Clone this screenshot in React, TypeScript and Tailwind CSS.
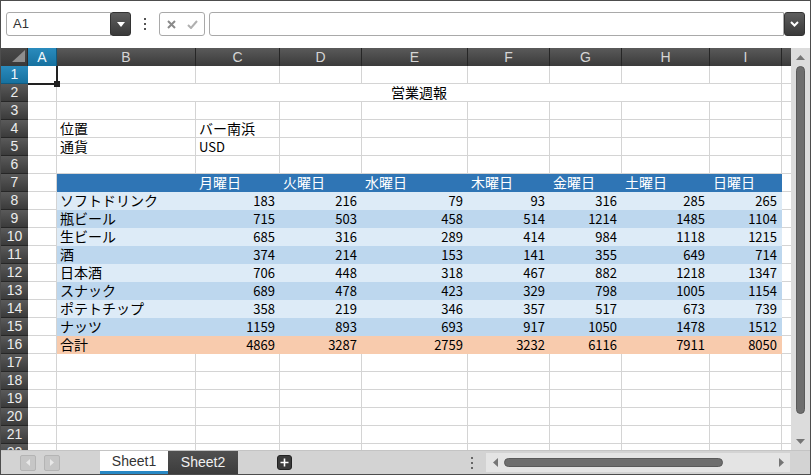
import React from 'react';

const W = ['w-[29px]', 'w-[139px]', 'w-[84px]', 'w-[82px]', 'w-[106px]', 'w-[82px]', 'w-[72px]', 'w-[88px]', 'w-[72px]'];
const LET = ['A', 'B', 'C', 'D', 'E', 'F', 'G', 'H', 'I'];
const JP = "font-['Noto_Sans_CJK_JP',sans-serif]";

const items: [string, number[]][] = [
  ['ソフトドリンク', [183, 216, 79, 93, 316, 285, 265]],
  ['瓶ビール', [715, 503, 458, 514, 1214, 1485, 1104]],
  ['生ビール', [685, 316, 289, 414, 984, 1118, 1215]],
  ['酒', [374, 214, 153, 141, 355, 649, 714]],
  ['日本酒', [706, 448, 318, 467, 882, 1218, 1347]],
  ['スナック', [689, 478, 423, 329, 798, 1005, 1154]],
  ['ポテトチップ', [358, 219, 346, 357, 517, 673, 739]],
  ['ナッツ', [1159, 893, 693, 917, 1050, 1478, 1512]],
];
const total: [string, number[]] = ['合計', [4869, 3287, 2759, 3232, 6116, 7911, 8050]];
const days = ['月曜日', '火曜日', '水曜日', '木曜日', '金曜日', '土曜日', '日曜日'];

const GRID = 'border-[#d4d4d4]';
const BLUE = 'bg-[#2f75b5] border-[#2f75b5]';
const LIGHT = 'bg-[#ddebf7] border-[#ddebf7]';
const MID = 'bg-[#bdd7ee] border-[#bdd7ee]';
const ORANGE = 'bg-[#f8cbad] border-[#f8cbad]';

function Cell({ w, fill, className = '', children }: { w: string; fill?: string; className?: string; children?: React.ReactNode }) {
  return (
    <div className={`${w} shrink-0 h-full border-r border-b ${fill ?? GRID} flex items-center overflow-hidden whitespace-nowrap leading-[17px] ${className}`}>
      {children}
    </div>
  );
}

function RowHead({ n, sel }: { n: number; sel?: boolean }) {
  return (
    <div
      className={`w-[27px] shrink-0 h-full border-b flex items-center justify-center text-[14px] leading-[17px] ${
        sel
          ? 'bg-linear-to-b from-[#2a8bbd] to-[#16719f] border-[#0f5a80] text-[#eef6fb]'
          : 'bg-linear-to-b from-[#5a5a5a] to-[#3b3b3b] border-[#262626] text-[#ececec]'
      }`}
    >
      {n}
    </div>
  );
}

function Filler() {
  return <div className={`flex-1 h-full border-b ${GRID}`} />;
}

function Row({ n, sel, children }: { n: number; sel?: boolean; children?: React.ReactNode }) {
  return (
    <div className="flex h-[18px] shrink-0">
      <RowHead n={n} sel={sel} />
      {children}
      <Filler />
    </div>
  );
}

function EmptyCells({ from = 0 }: { from?: number }) {
  return (
    <>
      {W.slice(from).map((w, i) => (
        <Cell key={i} w={w} />
      ))}
    </>
  );
}

function DataRow({ n, label, vals, fill }: { n: number; label: string; vals: number[]; fill: string }) {
  return (
    <Row n={n}>
      <Cell w={W[0]} />
      <Cell w={W[1]} fill={fill} className={`${JP} text-[14px] pl-[3px] text-black`}>
        {label}
      </Cell>
      {vals.map((v, i) => (
        <Cell key={i} w={W[i + 2]} fill={fill} className={`${JP} text-[13px] justify-end pr-[4px] text-black`}>
          {v}
        </Cell>
      ))}
    </Row>
  );
}

function TopBar() {
  return (
    <div className="h-[47px] shrink-0 flex items-start pt-[11px] pl-[5px] bg-white">
      <div className="flex h-[24px]">
        <div className="w-[105px] h-full border border-[#a9a9a9] rounded-l-[3px] flex items-center pl-[6px] text-[13px] text-[#333]">A1</div>
        <div className="w-[21px] h-full -ml-[1px] rounded-[3px] border border-[#333] bg-linear-to-b from-[#5e5e5e] to-[#3a3a3a] flex items-center justify-center">
          <svg width="8" height="5" viewBox="0 0 8 5">
            <polygon points="0,0 8,0 4,5" fill="#ffffff" />
          </svg>
        </div>
      </div>
      <div className="w-[28px] h-[24px] flex flex-col items-center justify-center gap-[3px]">
        <div className="w-[2px] h-[2px] bg-[#555]" />
        <div className="w-[2px] h-[2px] bg-[#555]" />
        <div className="w-[2px] h-[2px] bg-[#555]" />
      </div>
      <div className="w-[46px] h-[24px] border border-[#a9a9a9] rounded-[3px] flex items-center pl-[7px] gap-[11px]">
        <svg width="9" height="9" viewBox="0 0 9 9">
          <path d="M1 1 L8 8 M8 1 L1 8" stroke="#8a8a8a" strokeWidth="2" />
        </svg>
        <svg width="11" height="9" viewBox="0 0 11 9">
          <path d="M1 5 L4 8 L10 1" stroke="#b0b0b0" strokeWidth="2" fill="none" />
        </svg>
      </div>
      <div className="w-[575px] h-[24px] ml-[4px] border border-[#a9a9a9] rounded-l-[3px]" />
      <div className="w-[21px] h-[24px] rounded-[3px] border border-[#333] bg-linear-to-b from-[#5e5e5e] to-[#3a3a3a] flex items-center justify-center">
        <svg width="9" height="6" viewBox="0 0 9 6">
          <path d="M1 1 L4.5 4.5 L8 1" stroke="#ffffff" strokeWidth="2" fill="none" />
        </svg>
      </div>
    </div>
  );
}

function HeaderRow() {
  return (
    <div className="flex h-[18px] shrink-0">
      <div className="w-[27px] shrink-0 h-full bg-linear-to-b from-[#4a4a4a] to-[#383838] border-r border-[#2a2a2a]">
        <svg width="26" height="18" viewBox="0 0 26 18">
          <polygon points="11,14 24,14 24,2" fill="#8e8e8e" />
        </svg>
      </div>
      {W.map((w, i) => (
        <div
          key={i}
          className={`${w} shrink-0 h-full border-r flex items-center justify-center text-[14px] leading-[17px] ${
            i === 0
              ? 'bg-linear-to-b from-[#2a8bbd] to-[#16719f] border-[#0f5a80] text-[#f2f8fc]'
              : 'bg-linear-to-b from-[#5a5a5a] to-[#3b3b3b] border-[#262626] text-[#d6d6d6]'
          }`}
        >
          {LET[i]}
        </div>
      ))}
      <div className="flex-1 h-full bg-linear-to-b from-[#5a5a5a] to-[#3b3b3b]" />
    </div>
  );
}

function VScroll() {
  return (
    <div className="w-[19px] shrink-0 h-full bg-[#dcdcdc] flex flex-col items-center">
      <div className="h-[18px] flex items-center justify-center">
        <svg width="9" height="5" viewBox="0 0 9 5">
          <polygon points="0,5 4.5,0 9,5" fill="#757575" />
        </svg>
      </div>
      <div className="w-[9px] h-[348px] rounded-full bg-[#6e6e6e] border border-[#5a5a5a]" />
      <div className="flex-1" />
      <div className="h-[18px] flex items-center justify-center">
        <svg width="9" height="5" viewBox="0 0 9 5">
          <polygon points="0,0 4.5,5 9,0" fill="#757575" />
        </svg>
      </div>
    </div>
  );
}

function BottomBar() {
  return (
    <div className="h-[24px] shrink-0 bg-[#d3d3d3] border-t border-[#c4c4c4] flex">
      <div className="w-[99px] shrink-0 flex items-center pl-[19px] gap-[8px]">
        <div className="w-[16px] h-[16px] rounded-[2px] bg-[#c6c6c6] border border-[#b4b4b4] flex items-center justify-center">
          <svg width="4" height="7" viewBox="0 0 4 7">
            <polygon points="4,0 0,3.5 4,7" fill="#e8e8e8" />
          </svg>
        </div>
        <div className="w-[16px] h-[16px] rounded-[2px] bg-[#c6c6c6] border border-[#b4b4b4] flex items-center justify-center">
          <svg width="4" height="7" viewBox="0 0 4 7">
            <polygon points="0,0 4,3.5 0,7" fill="#e8e8e8" />
          </svg>
        </div>
      </div>
      <div className="w-[68px] shrink-0 bg-white border-b-[3px] border-[#2888c4] flex items-center justify-center text-[14px] text-[#333]">Sheet1</div>
      <div className="w-[70px] shrink-0 bg-linear-to-b from-[#505050] to-[#3c3c3c] flex items-center justify-center text-[14px] text-[#f0f0f0]">Sheet2</div>
      <div className="ml-[39px] self-center w-[15px] h-[15px] rounded-[3px] bg-[#3a3a3a] border border-[#222] flex items-center justify-center">
        <svg width="9" height="9" viewBox="0 0 9 9">
          <path d="M4.5 0.5 V8.5 M0.5 4.5 H8.5" stroke="#ffffff" strokeWidth="1.6" />
        </svg>
      </div>
      <div className="flex-1" />
      <div className="w-[28px] shrink-0 flex flex-col items-center justify-center gap-[3px]">
        <div className="w-[2px] h-[2px] bg-[#666]" />
        <div className="w-[2px] h-[2px] bg-[#666]" />
        <div className="w-[2px] h-[2px] bg-[#666]" />
      </div>
      <div className="w-[304px] shrink-0 h-[19px] mt-[2px] bg-[#e4e4e4] flex items-center">
        <div className="w-[18px] flex items-center justify-center">
          <svg width="5" height="9" viewBox="0 0 5 9">
            <polygon points="5,0 0,4.5 5,9" fill="#757575" />
          </svg>
        </div>
        <div className="w-[219px] h-[9px] rounded-full bg-[#6e6e6e] border border-[#5a5a5a]" />
        <div className="flex-1" />
        <div className="w-[18px] flex items-center justify-center">
          <svg width="5" height="9" viewBox="0 0 5 9">
            <polygon points="0,0 5,4.5 0,9" fill="#757575" />
          </svg>
        </div>
      </div>
      <div className="w-[20px] shrink-0" />
    </div>
  );
}

export default function App() {
  return (
    <div className="w-[811px] h-[475px] border border-[#4d4d4d] bg-white flex flex-col overflow-hidden font-['Liberation_Sans',Arial,sans-serif]">
      <TopBar />
      <div className="flex h-[402px] shrink-0">
        <div className="w-[790px] shrink-0 flex flex-col overflow-hidden">
          <HeaderRow />
          <div className="flex-1 overflow-hidden flex flex-col">
            <Row n={1} sel>
              <Cell w={W[0]} className="relative overflow-visible">
                <div className="absolute left-0 top-0 w-[30px] h-[19px] border-r-2 border-b-2 border-[#222] z-10">
                  <div className="absolute w-[6px] h-[6px] bg-[#222] -right-[4px] -bottom-[4px]" />
                </div>
              </Cell>
              <EmptyCells from={1} />
            </Row>
            <Row n={2}>
              <Cell w={W[0]} />
              <Cell w="w-[725px]" className={`${JP} text-[14px] justify-center text-black`}>
                営業週報
              </Cell>
            </Row>
            <Row n={3}>
              <EmptyCells />
            </Row>
            <Row n={4}>
              <Cell w={W[0]} />
              <Cell w={W[1]} className={`${JP} text-[14px] pl-[3px] text-black`}>位置</Cell>
              <Cell w={W[2]} className={`${JP} text-[14px] pl-[3px] text-black`}>バー南浜</Cell>
              <EmptyCells from={3} />
            </Row>
            <Row n={5}>
              <Cell w={W[0]} />
              <Cell w={W[1]} className={`${JP} text-[14px] pl-[3px] text-black`}>通貨</Cell>
              <Cell w={W[2]} className={`${JP} text-[13px] pl-[3px] text-black`}>USD</Cell>
              <EmptyCells from={3} />
            </Row>
            <Row n={6}>
              <EmptyCells />
            </Row>
            <Row n={7}>
              <Cell w={W[0]} />
              <Cell w={W[1]} fill={BLUE} />
              {days.map((d, i) => (
                <Cell key={i} w={W[i + 2]} fill={BLUE} className={`${JP} text-[14px] pl-[3px] text-white`}>
                  {d}
                </Cell>
              ))}
            </Row>
            {items.map(([label, vals], i) => (
              <DataRow key={i} n={8 + i} label={label} vals={vals} fill={i % 2 === 0 ? LIGHT : MID} />
            ))}
            <DataRow n={16} label={total[0]} vals={total[1]} fill={ORANGE} />
            {[17, 18, 19, 20, 21, 22].map((n) => (
              <Row key={n} n={n}>
                <EmptyCells />
              </Row>
            ))}
          </div>
        </div>
        <VScroll />
      </div>
      <BottomBar />
    </div>
  );
}
